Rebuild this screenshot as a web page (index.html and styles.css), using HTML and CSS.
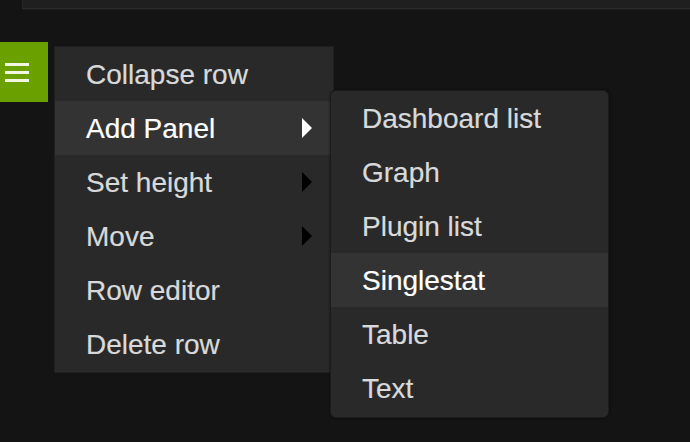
FILE: index.html
```html
<!DOCTYPE html>
<html>
<head>
<meta charset="utf-8">
<link rel="stylesheet" href="styles.css">
</head>
<body>
<div class="topbar"></div>
<div class="row">
  <div class="row-btn">
    <span class="bar"></span><span class="bar"></span><span class="bar"></span>
  </div>
  <ul class="menu">
    <li class="item">Collapse row</li>
    <li class="item active sub">Add Panel<span class="caret"></span>
      <ul class="menu submenu">
        <li class="item">Dashboard list</li>
        <li class="item">Graph</li>
        <li class="item">Plugin list</li>
        <li class="item active">Singlestat</li>
        <li class="item">Table</li>
        <li class="item">Text</li>
      </ul>
    </li>
    <li class="item sub">Set height<span class="caret"></span></li>
    <li class="item sub">Move<span class="caret"></span></li>
    <li class="item">Row editor</li>
    <li class="item">Delete row</li>
  </ul>
</div>
</body>
</html>
```

FILE: styles.css
```css
html, body {
  margin: 0;
  padding: 0;
  background: #141414;
  width: 690px;
  height: 442px;
  overflow: hidden;
  font-family: "Liberation Sans", Arial, sans-serif;
}
.topbar {
  margin-left: 22px;
  height: 8px;
  background: #1f1f20;
  border-bottom: 1px solid #2b2b2b;
  border-left: 1px solid #262626;
  box-shadow: 0 1px 0 #1a1a1a;
}
.row {
  display: flex;
  align-items: flex-start;
  margin-top: 33px;
}
.row-btn {
  width: 48px;
  height: 60px;
  background: #6aa100;
  display: flex;
  flex-direction: column;
  justify-content: center;
  gap: 5px;
  padding-left: 5px;
  box-sizing: border-box;
}
.bar {
  display: block;
  width: 24px;
  height: 3px;
  background: #f0f7e0;
}
.menu {
  list-style: none;
  margin: 0;
  padding: 0;
  background: #292929;
  border: 1px solid #1f1f1f;
}
.row > .menu {
  margin-left: 6px;
  margin-top: 4px;
  width: 278px;
  padding-bottom: 1px;
}
.item {
  position: relative;
  height: 54px;
  line-height: 56px;
  padding-left: 31px;
  font-size: 28px;
  color: #d8d9da;
  -webkit-text-stroke: 0.2px currentColor;
}
.item.active {
  background: #333333;
  color: #ffffff;
}
.caret {
  position: absolute;
  left: 247px;
  top: 17px;
  width: 0;
  height: 0;
  border-top: 10px solid transparent;
  border-bottom: 10px solid transparent;
  border-left: 10px solid #000;
}
.item.active > .caret {
  border-left-color: #ffffff;
}
.submenu {
  position: absolute;
  left: 275px;
  top: -11px;
  width: 277px;
  border-radius: 6px;
  border-color: #1c1c1c;
  padding: 0 0 2px;
  box-shadow: 0 0 3px rgba(0,0,0,0.5);
  overflow: hidden;
}
.submenu .item {
  color: #d8d9da;
}
.submenu .item.active {
  color: #ffffff;
}
```
